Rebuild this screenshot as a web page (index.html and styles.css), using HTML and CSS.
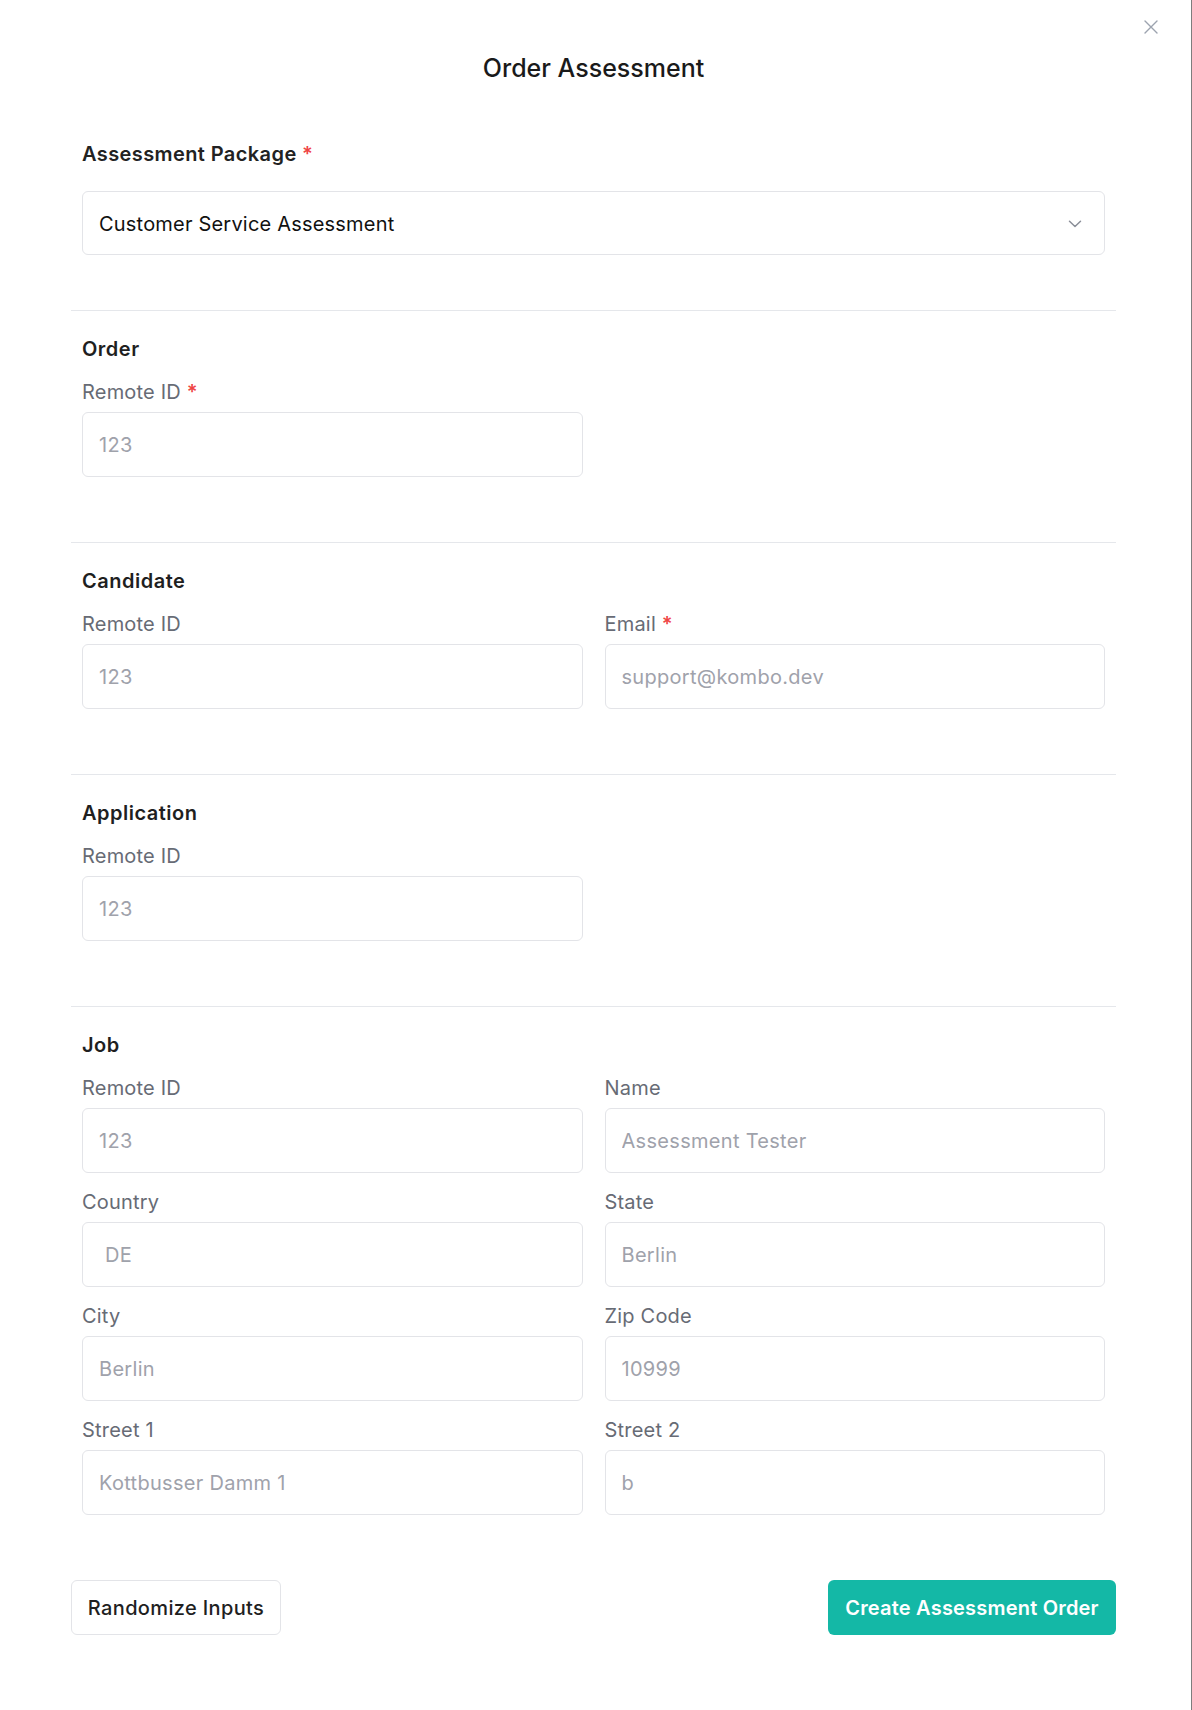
FILE: index.html
```html
<!DOCTYPE html>
<html lang="en">
<head>
<meta charset="utf-8">
<title>Order Assessment</title>
<link rel="stylesheet" href="styles.css">
</head>
<body>
<div class="modal">
  <button class="close" aria-label="Close">
    <svg width="16" height="16" viewBox="0 0 16 16"><path d="M2 2L14 14M14 2L2 14" stroke="#9ca3af" stroke-width="1.4" stroke-linecap="round"/></svg>
  </button>
  <h1 class="title">Order Assessment</h1>

  <div class="package">
    <div class="package-label">Assessment Package <span class="req">*</span></div>
    <div class="select">
      <span>Customer Service Assessment</span>
      <svg class="chev" width="14" height="8" viewBox="0 0 14 8"><path d="M1.5 1.2L7 6.5L12.5 1.2" fill="none" stroke="#8b8f99" stroke-width="1.5" stroke-linecap="round" stroke-linejoin="round"/></svg>
    </div>
  </div>

  <section class="section">
    <h2 class="sec-title">Order</h2>
    <div class="grid">
      <div class="field">
        <label class="label">Remote ID <span class="req">*</span></label>
        <input class="input" placeholder="123">
      </div>
    </div>
  </section>

  <section class="section">
    <h2 class="sec-title">Candidate</h2>
    <div class="grid">
      <div class="field">
        <label class="label">Remote ID</label>
        <input class="input" placeholder="123">
      </div>
      <div class="field">
        <label class="label">Email <span class="req">*</span></label>
        <input class="input" placeholder="support@kombo.dev">
      </div>
    </div>
  </section>

  <section class="section">
    <h2 class="sec-title">Application</h2>
    <div class="grid">
      <div class="field">
        <label class="label">Remote ID</label>
        <input class="input" placeholder="123">
      </div>
    </div>
  </section>

  <section class="section last">
    <h2 class="sec-title">Job</h2>
    <div class="grid">
      <div class="field">
        <label class="label">Remote ID</label>
        <input class="input" placeholder="123">
      </div>
      <div class="field">
        <label class="label">Name</label>
        <input class="input" placeholder="Assessment Tester">
      </div>
      <div class="field">
        <label class="label">Country</label>
        <input class="input" placeholder=" DE">
      </div>
      <div class="field">
        <label class="label">State</label>
        <input class="input" placeholder="Berlin">
      </div>
      <div class="field">
        <label class="label">City</label>
        <input class="input" placeholder="Berlin">
      </div>
      <div class="field">
        <label class="label">Zip Code</label>
        <input class="input" placeholder="10999">
      </div>
      <div class="field">
        <label class="label">Street 1</label>
        <input class="input" placeholder="Kottbusser Damm 1">
      </div>
      <div class="field">
        <label class="label">Street 2</label>
        <input class="input" placeholder="b">
      </div>
    </div>
  </section>

  <div class="footer">
    <button class="btn btn-outline">Randomize Inputs</button>
    <button class="btn btn-primary">Create Assessment Order</button>
  </div>
</div>
</body>
</html>
```

FILE: styles.css
```css
html, body {
  margin: 0;
  padding: 0;
}
body {
  background: #7d7d7d;
  font-family: Inter, "Noto Sans", "Liberation Sans", sans-serif;
  color: #1f1f1f;
}
.modal {
  position: relative;
  width: 1191px;
  min-height: 1710px;
  box-sizing: border-box;
  background: #ffffff;
  padding: 52px 75px 0 71px;
}
.close {
  position: absolute;
  top: 19px;
  right: 32px;
  border: 0;
  background: none;
  padding: 0;
  width: 16px;
  height: 16px;
  cursor: pointer;
}
.close svg { display: block; }
.title {
  margin: 0 0 55px;
  text-align: center;
  font-size: 25px;
  line-height: 32px;
  font-weight: 500;
  color: #1a1a1a;
  letter-spacing: 0;
}
.package {
  padding: 0 11px 55px;
}
.package-label {
  font-size: 20px;
  line-height: 28px;
  font-weight: 600;
  color: #222;
  margin-bottom: 24px;
  letter-spacing: 0.4px;
  padding-top: 1px;
  height: 28px;
  box-sizing: border-box;
}
.req {
  color: #ef4444;
  font-weight: 600;
}
.select {
  height: 64px;
  box-sizing: border-box;
  border: 1px solid #e3e4e8;
  border-radius: 6px;
  display: flex;
  align-items: center;
  justify-content: space-between;
  padding: 1px 22px 0 16px;
  font-size: 20px;
  letter-spacing: 0.2px;
  color: #111;
}
.section {
  border-top: 1px solid #e5e7eb;
  padding: 24px 11px 65px;
}
.sec-title {
  margin: 0 0 13px;
  font-size: 20px;
  line-height: 28px;
  font-weight: 600;
  color: #1f1f1f;
  letter-spacing: 0.5px;
}
.grid {
  display: grid;
  grid-template-columns: 1fr 1fr;
  column-gap: 22px;
  row-gap: 13px;
}
.field {
  display: flex;
  flex-direction: column;
}
.label {
  font-size: 20px;
  line-height: 28px;
  color: #676b75;
  padding-top: 2px;
  margin-bottom: 6px;
  letter-spacing: 0.2px;
}
.input {
  height: 65px;
  box-sizing: border-box;
  border: 1px solid #e3e4e8;
  border-radius: 6px;
  padding: 1px 16px 0;
  font-family: inherit;
  font-size: 20px;
  letter-spacing: 0.3px;
  color: #111;
  outline: none;
  background: #fff;
}
.input::placeholder {
  color: #9fa2ab;
}
.footer {
  display: flex;
  justify-content: space-between;
}
.btn {
  height: 55px;
  box-sizing: border-box;
  border-radius: 6px;
  font-family: inherit;
  font-size: 20px;
  cursor: pointer;
}
.btn-outline {
  width: 210px;
  background: #fff;
  border: 1px solid #e3e4e8;
  color: #1f1f1f;
  font-weight: 500;
  letter-spacing: 0.35px;
}
.btn-primary {
  width: 288px;
  background: #14b8a6;
  border: 0;
  color: #fff;
  font-weight: 600;
  letter-spacing: 0.2px;
}
```
